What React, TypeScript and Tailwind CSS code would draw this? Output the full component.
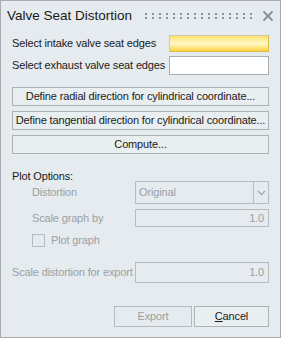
import React from "react";

const font = { fontFamily: '"Liberation Sans", Arial, sans-serif' };

function Btn({ children, className = "" }: { children: React.ReactNode; className?: string }) {
  return (
    <div
      className={`flex items-center justify-center whitespace-nowrap border border-[#adb2b6] bg-[#e9eef1] text-[#1a1a1a] ${className}`}
    >
      {children}
    </div>
  );
}

function Grip() {
  const dots = Array.from({ length: 16 });
  return (
    <div className="flex flex-col gap-[2px]">
      {[0, 1].map((r) => (
        <div key={r} className="flex gap-[5px]">
          {dots.map((_, i) => (
            <span key={i} className="h-[2px] w-[2px] bg-[#8c9196]" />
          ))}
        </div>
      ))}
    </div>
  );
}

export default function App() {
  return (
    <div
      style={font}
      className="h-[338px] w-[281px] overflow-hidden whitespace-nowrap border border-[#a7abaf] bg-[#e5ebef] text-[11px] leading-none tracking-[-0.15px]"
    >
      {/* title bar */}
      <div className="flex h-[30px] items-center pl-[6px] pr-[6px]">
        <span className="text-[13.5px] tracking-normal text-[#1a1a1a]">Valve Seat Distortion</span>
        <div className="ml-[13px]">
          <Grip />
        </div>
        <svg className="ml-auto" width="12" height="12" viewBox="0 0 12 12">
          <path d="M1.5 1.5 L10.5 10.5 M10.5 1.5 L1.5 10.5" stroke="#8a8f94" strokeWidth="1.8" />
        </svg>
      </div>

      <div className="px-[11px]">
        {/* selection rows */}
        <div className="mt-[3px] flex h-[18px] items-center justify-between">
          <span className="text-[#1a1a1a]">Select intake valve seat edges</span>
          <div className="h-[17px] w-[100px] border border-[#d9b84a] border-t-[#cfc9b0] border-l-[#cfc9b0] bg-gradient-to-b from-[#ffe36a] via-[#fff7c6] to-[#ffd42c]" />
        </div>
        <div className="mt-[4px] flex h-[19px] items-center justify-between">
          <span className="text-[#1a1a1a]">Select exhaust valve seat edges</span>
          <div className="h-[19px] w-[100px] border border-[#a9aeb2] bg-white" />
        </div>

        {/* buttons */}
        <div className="mt-[12px] flex flex-col gap-[5px]">
          <Btn className="h-[19px]">Define radial direction for cylindrical coordinate...</Btn>
          <Btn className="h-[19px]">Define tangential direction for cylindrical coordinate...</Btn>
          <Btn className="h-[19px]">Compute...</Btn>
        </div>

        {/* plot options */}
        <div className="mt-[17px] h-[10px] text-[#1a1a1a]">Plot Options:</div>
        <div className="flex h-[23px] items-center">
          <span className="w-[123px] pl-[20px] text-[#9aa0a4]">Distortion</span>
          <div className="flex h-[23px] flex-1 border border-[#b7bcc0]">
            <span className="flex flex-1 items-center pl-[3px] text-[#9aa0a4]">Original</span>
            <div className="flex w-[15px] items-center justify-center border-l border-[#b7bcc0]">
              <svg width="9" height="6" viewBox="0 0 9 6">
                <path d="M1 1 L4.5 4.5 L8 1" fill="none" stroke="#a4a9ad" strokeWidth="1.4" />
              </svg>
            </div>
          </div>
        </div>
        <div className="mt-[5px] flex h-[18px] items-center">
          <span className="w-[123px] pl-[20px] text-[#9aa0a4]">Scale graph by</span>
          <div className="flex h-[18px] flex-1 items-center justify-end border border-[#b7bcc0] pr-[4px] text-[#9aa0a4]">
            1.0
          </div>
        </div>
        <div className="mt-[7px] flex h-[13px] items-center pl-[20px]">
          <span className="h-[13px] w-[13px] border border-[#b7bcc0]" />
          <span className="ml-[6px] text-[#9aa0a4]">Plot graph</span>
        </div>

        {/* export scale */}
        <div className="mt-[15px] flex h-[21px] items-center">
          <span className="w-[123px] text-[#9aa0a4]">Scale distortion for export</span>
          <div className="flex h-[21px] flex-1 items-center justify-end border border-[#b7bcc0] pr-[4px] text-[#9aa0a4]">
            1.0
          </div>
        </div>

        {/* footer */}
        <div className="mt-[23px] flex justify-end gap-[2px]">
          <div className="flex h-[21px] w-[78px] items-center justify-center border border-[#b7bcc0] text-[#9aa0a4]">
            Export
          </div>
          <Btn className="h-[21px] w-[75px]">
            <span>
              <span className="underline">C</span>ancel
            </span>
          </Btn>
        </div>
      </div>
    </div>
  );
}
